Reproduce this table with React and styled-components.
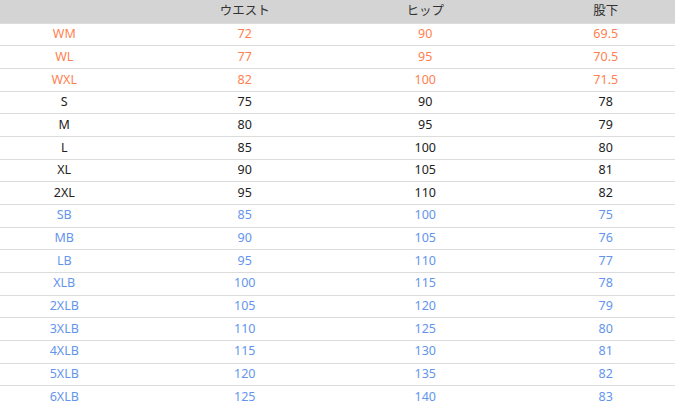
import React from 'react';
import styled, { createGlobalStyle } from 'styled-components';

const GlobalStyle = createGlobalStyle`
  html, body {
    margin: 0;
    padding: 0;
    background: #fff;
    overflow: hidden;
  }
  body {
    font-family: "Noto Sans", "Noto Sans CJK JP", sans-serif;
  }
`;

const tones = {
  women: 'coral',
  regular: '#222',
  big: 'cornflowerblue',
};

const rows = [
  ['WM', '72', '90', '69.5', 'women'],
  ['WL', '77', '95', '70.5', 'women'],
  ['WXL', '82', '100', '71.5', 'women'],
  ['S', '75', '90', '78', 'regular'],
  ['M', '80', '95', '79', 'regular'],
  ['L', '85', '100', '80', 'regular'],
  ['XL', '90', '105', '81', 'regular'],
  ['2XL', '95', '110', '82', 'regular'],
  ['SB', '85', '100', '75', 'big'],
  ['MB', '90', '105', '76', 'big'],
  ['LB', '95', '110', '77', 'big'],
  ['XLB', '100', '115', '78', 'big'],
  ['2XLB', '105', '120', '79', 'big'],
  ['3XLB', '110', '125', '80', 'big'],
  ['4XLB', '115', '130', '81', 'big'],
  ['5XLB', '120', '135', '82', 'big'],
  ['6XLB', '125', '140', '83', 'big'],
];

const Table = styled('div')`
  width: 722px;
  margin-left: -26px;
`;

const HeadRow = styled('div')`
  display: grid;
  grid-template-columns: repeat(4, 1fr);
  height: 22.67px;
  background: #d4d4d4;
  color: #333;
`;

const Row = styled('div')`
  display: grid;
  grid-template-columns: repeat(4, 1fr);
  height: 22.67px;
  box-sizing: border-box;
  border-top: 1px solid #dcdcdc;
  color: ${({ $tone }) => tones[$tone]};
`;

const Cell = styled('div')`
  display: flex;
  align-items: center;
  justify-content: center;
  font-size: 12.5px;
  line-height: 1;
`;

function App() {
  return (
    <>
      <GlobalStyle />
      <Table>
        <HeadRow>
          <Cell />
          <Cell>ウエスト</Cell>
          <Cell>ヒップ</Cell>
          <Cell>股下</Cell>
        </HeadRow>
        {rows.map(([size, waist, hip, inseam, tone]) => (
          <Row key={size} $tone={tone}>
            <Cell>{size}</Cell>
            <Cell>{waist}</Cell>
            <Cell>{hip}</Cell>
            <Cell>{inseam}</Cell>
          </Row>
        ))}
      </Table>
    </>
  );
}

export default App;
